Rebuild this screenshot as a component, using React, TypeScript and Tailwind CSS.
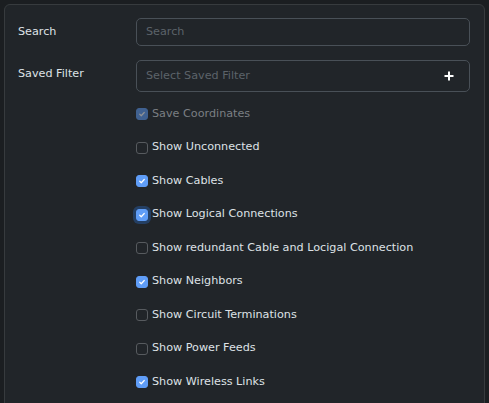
import React from "react";

const items: { label: string; checked: boolean; disabled?: boolean; focus?: boolean }[] = [
  { label: "Save Coordinates", checked: true, disabled: true },
  { label: "Show Unconnected", checked: false },
  { label: "Show Cables", checked: true },
  { label: "Show Logical Connections", checked: true, focus: true },
  { label: "Show redundant Cable and Locigal Connection", checked: false },
  { label: "Show Neighbors", checked: true },
  { label: "Show Circuit Terminations", checked: false },
  { label: "Show Power Feeds", checked: false },
  { label: "Show Wireless Links", checked: true },
];

function Box({ checked, disabled, focus }: { checked: boolean; disabled?: boolean; focus?: boolean }) {
  return (
    <span
      className={
        "flex h-[12px] w-[12px] shrink-0 items-center justify-center rounded-[3px] border " +
        (checked ? "border-[#5f9df7] bg-[#5f9df7] " : "border-[#575b5f] bg-[#212529] ") +
        (disabled ? "opacity-50 " : "") +
        (focus ? "shadow-[0_0_0_3px_rgba(40,95,170,0.45)]" : "")
      }
    >
      {checked && (
        <svg width="8" height="8" viewBox="0 0 16 16" fill="none">
          <path d="M3.5 8.5l3 3 6-6.5" stroke="#fff" strokeWidth="2.4" strokeLinecap="round" strokeLinejoin="round" />
        </svg>
      )}
    </span>
  );
}

export default function App() {
  return (
    <div className="h-[403px] w-[489px] overflow-hidden bg-[#1b1e21] pl-[4px] pt-[4px] pr-[4px] font-['DejaVu_Sans',sans-serif] text-[11.2px]">
      <div className="h-[420px] rounded-[6px] border border-[#373b3e] bg-[#212529] px-[13px] pt-[13px]">
        <div className="flex items-center">
          <div className="w-[118px] pt-[1px] text-[#dee2e6]">Search</div>
          <div className="mr-[1px] flex h-[28px] flex-1 items-center rounded-[5px] border border-[#495057] px-[9px] pt-[1px] text-[#5c636a]">
            Search
          </div>
        </div>
        <div className="mt-[14px] flex items-start">
          <div className="w-[118px] pt-[6px] text-[#dee2e6]">Saved Filter</div>
          <div className="mr-[1px] flex h-[32px] flex-1 items-center justify-between rounded-[5px] border border-[#495057] pl-[9px] pr-[15px] text-[#5c636a]">
            <span>Select Saved Filter</span>
            <svg width="10" height="10" viewBox="0 0 10 10">
              <path d="M5 0.5v9M0.5 5h9" stroke="#fff" strokeWidth="2" />
            </svg>
          </div>
        </div>
        <div className="mt-[5.6px] flex flex-col pl-[118px]">
          {items.map((it) => (
            <div key={it.label} className="flex h-[33.5px] items-center gap-[4px]">
              <Box checked={it.checked} disabled={it.disabled} focus={it.focus} />
              <span className={it.disabled ? "text-[#7b7f83]" : "text-[#dee2e6]"}>{it.label}</span>
            </div>
          ))}
        </div>
      </div>
    </div>
  );
}
